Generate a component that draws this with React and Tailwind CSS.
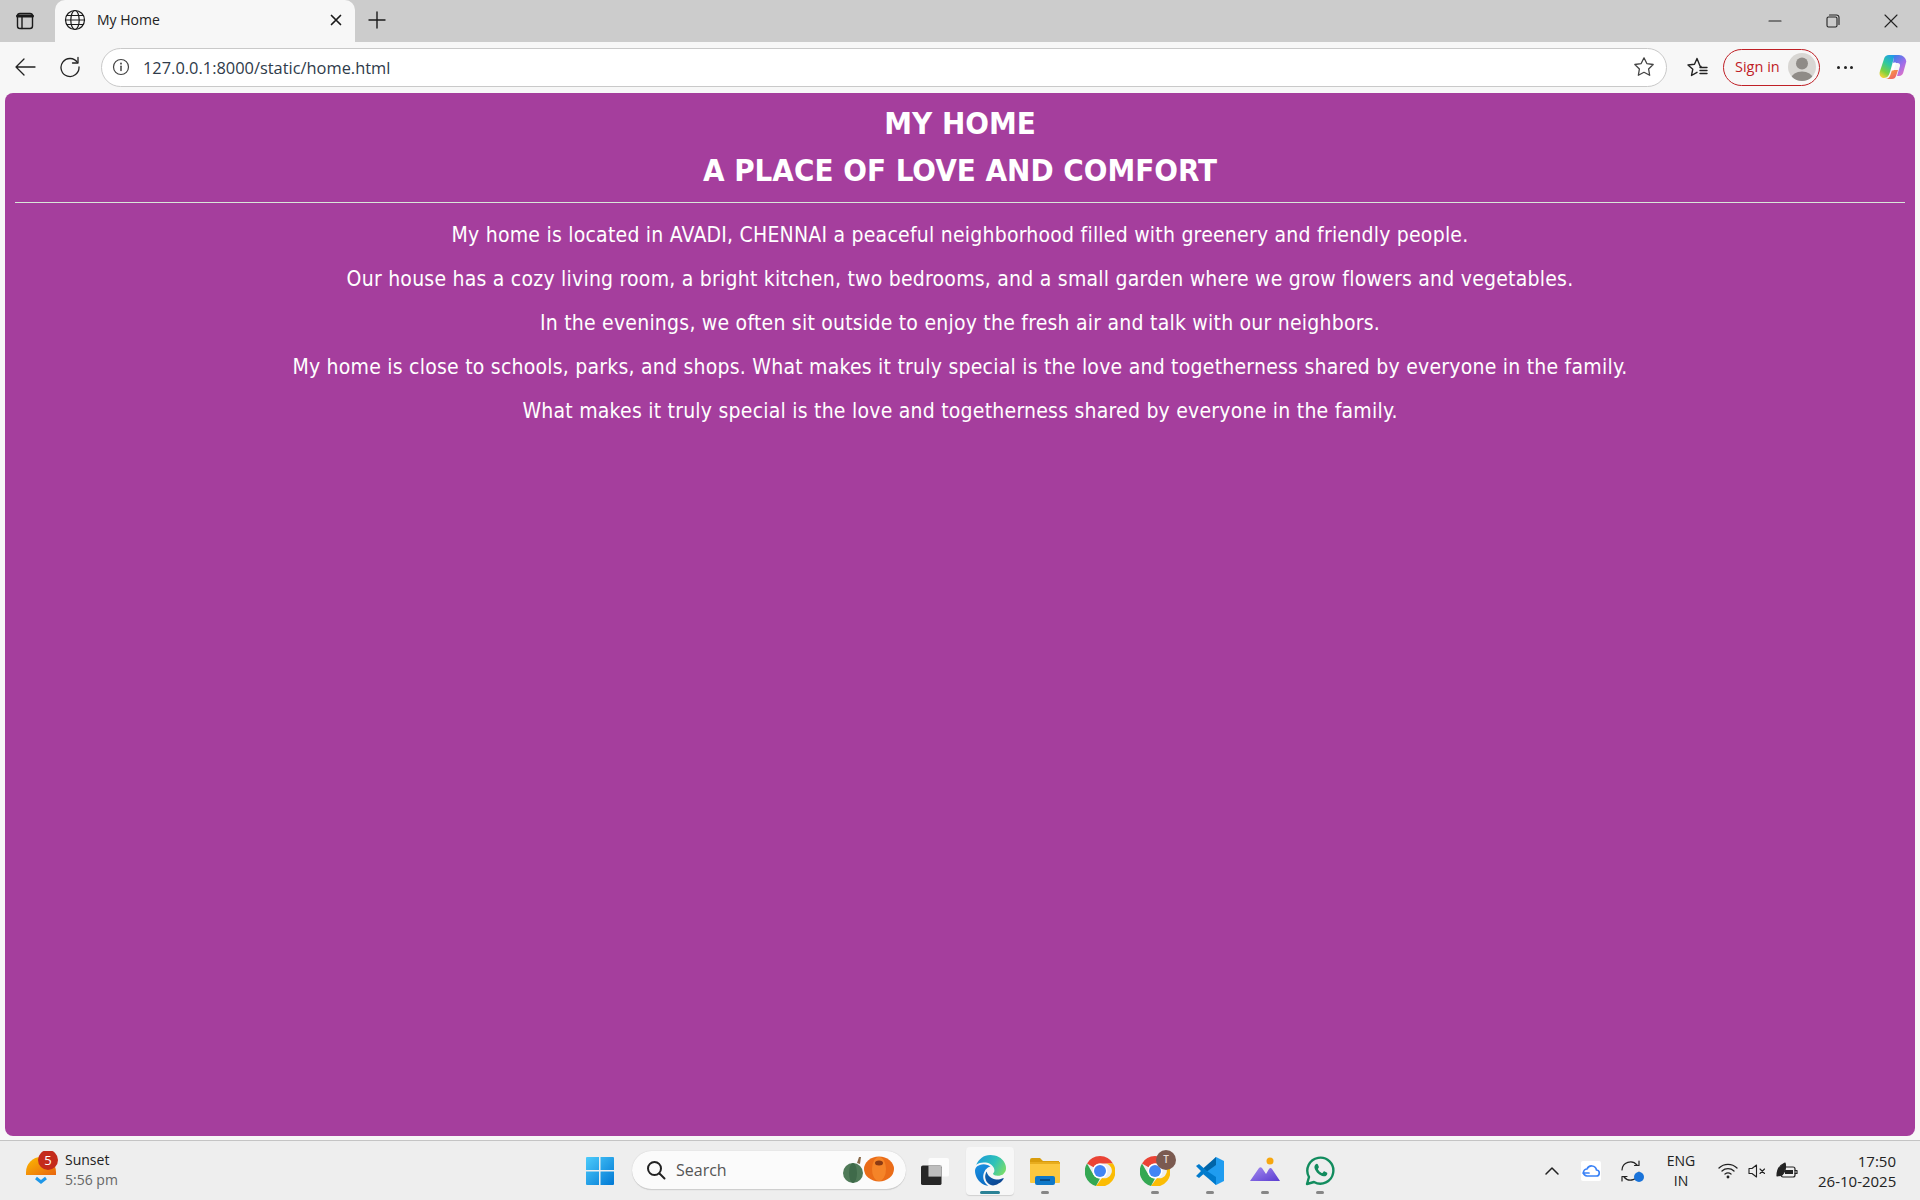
import React from "react";
import { FiStar } from "react-icons/fi";

const lines = [
  "My home is located in AVADI, CHENNAI a peaceful neighborhood filled with greenery and friendly people.",
  "Our house has a cozy living room, a bright kitchen, two bedrooms, and a small garden where we grow flowers and vegetables.",
  "In the evenings, we often sit outside to enjoy the fresh air and talk with our neighbors.",
  "My home is close to schools, parks, and shops. What makes it truly special is the love and togetherness shared by everyone in the family.",
  "What makes it truly special is the love and togetherness shared by everyone in the family.",
];

const Ico = ({ w = 24, h = 24, vb = "0 0 24 24", className = "", strokeWidth = 1.4, children }) => (
  <svg width={w} height={h} viewBox={vb} fill="none" stroke="currentColor" strokeWidth={strokeWidth} strokeLinecap="round" strokeLinejoin="round" className={`shrink-0 ${className}`}>
    {children}
  </svg>
);

const TabStrip = () => (
  <div className="flex h-[42px] items-end bg-[#cccccc] text-[#1a1a1a]">
    <div className="flex h-[42px] w-[55px] items-center justify-center pr-[5px]">
      <Ico w={20} h={20} vb="0 0 20 20">
        <rect x="2.500" y="2.500" width="15" height="15" rx="2.500" />
        <path d="M2.500 5h15" strokeWidth="3" />
        <path d="M7 6.500v11" />
      </Ico>
    </div>
    <div className="flex h-[42px] w-[300px] items-center rounded-t-[10px] bg-[#f7f7f7] pb-[3px] pl-[9px] pr-[9px]">
      <Ico w={22} h={22} vb="0 0 22 22" strokeWidth={1.2}>
        <circle cx="11" cy="11" r="9.500" />
        <ellipse cx="11" cy="11" rx="4.200" ry="9.500" />
        <path d="M1.500 11h19M2.800 6.500h16.400M2.800 15.500h16.400" />
      </Ico>
      <span className="ml-[11px] flex-1 text-[14px] font-['Open_Sans','Noto_Sans',sans-serif] text-[#222]">My Home</span>
      <Ico w={14} h={14} vb="0 0 14 14" className="mr-[3px]" strokeWidth={1.7}>
        <path d="M2.500 2.500l9 9M11.500 2.500l-9 9" />
      </Ico>
    </div>
    <div className="flex h-[42px] w-[44px] items-center justify-center pb-[3px]">
      <Ico w={20} h={20} vb="0 0 20 20">
        <path d="M10 2v16M2 10h16" />
      </Ico>
    </div>
    <div className="flex-1" />
    <div className="flex h-[42px] items-center text-[#222]">
      <div className="flex w-[58px] justify-center">
        <Ico w={14} h={14} vb="0 0 14 14" strokeWidth={1.1}><path d="M1 7h12" /></Ico>
      </div>
      <div className="flex w-[58px] justify-center">
        <Ico w={14} h={14} vb="0 0 14 14" strokeWidth={1.1}>
          <rect x="1" y="3" width="10" height="10" rx="1.500" />
          <path d="M3.500 1h7A2.500 2.500 0 0 1 13 3.500v7" />
        </Ico>
      </div>
      <div className="flex w-[58px] justify-center">
        <Ico w={14} h={14} vb="0 0 14 14" strokeWidth={1.1}><path d="M1 1l12 12M13 1L1 13" /></Ico>
      </div>
    </div>
  </div>
);

const Copilot = () => (
  <svg width="28" height="28" viewBox="0 0 28 28" className="shrink-0">
    <defs>
      <linearGradient id="cpa" x1="0.700" y1="0" x2="0.200" y2="1">
        <stop offset="0" stopColor="#1f9be8" />
        <stop offset="0.4" stopColor="#2fc8a0" />
        <stop offset="0.75" stopColor="#7fd13f" />
        <stop offset="1" stopColor="#f5d33a" />
      </linearGradient>
      <linearGradient id="cpb" x1="0.200" y1="0" x2="0.800" y2="1">
        <stop offset="0" stopColor="#3f7fe8" />
        <stop offset="0.5" stopColor="#9a6eea" />
        <stop offset="1" stopColor="#e573c4" />
      </linearGradient>
      <linearGradient id="cpc" x1="0" y1="0" x2="1" y2="1">
        <stop offset="0" stopColor="#f9b032" />
        <stop offset="1" stopColor="#ee5570" />
      </linearGradient>
    </defs>
    <path d="M10 2h8c-1.500 0-2.500 1-3 2.500L11 19c-.8 3-2.500 6-6 6-3 0-5-2.500-4.300-6L5 6c.6-2.500 2.500-4 5-4z" fill="url(#cpa)" />
    <path d="M16 2h4c4 0 7 3 7.300 6.500l-3 11c-.6 2-2 3.500-4.300 3.500h-2l3-10c.4-1.800-.8-3-2.500-3H14l.8-5.500c.2-1.500.6-2.500 1.200-2.500z" fill="url(#cpb)" />
    <path d="M13 17h6l-2 6c-.6 1.800-2 3-4 3H6c3 0 5-2 5.700-5z" fill="url(#cpc)" />
    <path d="M14.500 9.500h2.500l-2.500 8H12z" fill="#fff" />
  </svg>
);

const Toolbar = () => (
  <div className="flex h-[50px] items-center bg-[#f7f7f7] text-[#222]">
    <div className="flex w-[47px] justify-center pl-[2px]">
      <Ico w={22} h={22} vb="0 0 22 22" strokeWidth={1.3}><path d="M21 11H2M10 3l-8 8 8 8" /></Ico>
    </div>
    <div className="flex w-[46px] justify-center">
      <Ico w={22} h={22} vb="0 0 22 22" strokeWidth={1.3}>
        <path d="M18.500 6.500A9 9 0 1 0 20 11" />
        <path d="M19 1.500v5.500h-5.500" />
      </Ico>
    </div>
    <div className="ml-[8px] flex h-[39px] w-[1566px] items-center rounded-full border border-[#c9c9c9] bg-white pl-[10px] pr-[11px]">
      <Ico w={18} h={18} vb="0 0 18 18" className="text-[#444]" strokeWidth={1.2}>
        <circle cx="9" cy="9" r="7.500" />
        <path d="M9 8.200v4.300" strokeWidth="1.500" />
        <path d="M9 5.500v.2" strokeWidth="1.800" />
      </Ico>
      <span className="ml-[13px] flex-1 pt-[2px] font-['Open_Sans','Noto_Sans',sans-serif] text-[16.400px] text-[#2f3b4a]">127.0.0.1:8000/static/home.html</span>
      <FiStar className="text-[#444]" size={22} strokeWidth={1.4} />
    </div>
    <div className="ml-[19px] flex w-[21px] justify-center">
      <Ico w={22} h={22} vb="0 0 22 22" strokeWidth={1.4}>
        <path d="M15 10.500l-.9-.2L11 2.500 8.500 8.300 2 9l4.800 4.200L5.500 19.500l5.500-3.200" />
        <path d="M14 11.500h7M14 14.500h7M14 17.500h7" />
      </Ico>
    </div>
    <div className="ml-[16px] flex h-[37px] w-[97px] items-center justify-between rounded-full border-[1.500px] border-[#bf2026] pl-[11px] pr-[3px]">
      <span className="font-['Open_Sans','Noto_Sans',sans-serif] text-[14.500px] text-[#bf2026]">Sign in</span>
      <div className="flex h-[28px] w-[28px] items-center justify-center overflow-hidden rounded-full bg-[#d8d6d3]">
        <svg width="28" height="28" viewBox="0 0 28 28">
          <circle cx="14" cy="10.500" r="6" fill="#8f8b87" />
          <ellipse cx="14" cy="25" rx="10.500" ry="6.500" fill="#8f8b87" />
        </svg>
      </div>
    </div>
    <div className="ml-[17px] flex w-[16px] justify-between">
      <span className="h-[3px] w-[3px] rounded-full bg-[#222]" />
      <span className="h-[3px] w-[3px] rounded-full bg-[#222]" />
      <span className="h-[3px] w-[3px] rounded-full bg-[#222]" />
    </div>
    <div className="ml-[26px]"><Copilot /></div>
  </div>
);

const Page = () => (
  <div className="flex-1 bg-[#f7f7f7] px-[5px] pt-px">
    <div className="h-[1043px] rounded-[8px] bg-[#a53e9d] px-[10px] text-center text-white font-['DejaVu_Sans_Condensed','DejaVu_Sans',sans-serif]">
      <h1 className="pt-[7px] text-[31px] leading-[47px] font-bold">MY HOME</h1>
      <h1 className="text-[31px] leading-[47px] font-bold">A PLACE OF LOVE AND COMFORT</h1>
      <hr className="mt-[8px] border-t border-[#d9e6d9]" />
      <div className="mt-[20px] flex flex-col gap-[20px]">
        {lines.map((l, i) => (
          <p key={i} className="text-[21px] leading-[24px] tracking-[0.23px]">{l}</p>
        ))}
      </div>
    </div>
  </div>
);

const Weather = () => (
  <div className="flex items-center">
    <svg width="34" height="40" viewBox="0 0 34 40" className="shrink-0">
      <defs>
        <linearGradient id="sun" x1="0" y1="0" x2="1" y2="1">
          <stop offset="0" stopColor="#fdbb00" />
          <stop offset="1" stopColor="#e8650f" />
        </linearGradient>
      </defs>
      <path d="M2 24V21A15 15 0 0 1 32 21v3z" fill="url(#sun)" />
      <path d="M12 27l5 4 5-4" stroke="#1e97e8" strokeWidth="3" fill="none" />
      <circle cx="24" cy="9" r="10" fill="#c42b1c" />
      <text x="24" y="13.500" textAnchor="middle" fontSize="13" fill="#fff" fontFamily="Open Sans">5</text>
    </svg>
    <div className="ml-[7px] -mt-[2px] font-['Open_Sans','Noto_Sans',sans-serif] text-[14px] leading-[20px]">
      <div className="text-[#222]">Sunset</div>
      <div className="text-[#666]">5:56 pm</div>
    </div>
  </div>
);

const StartIcon = () => (
  <svg width="30" height="30" viewBox="0 0 30 30" className="shrink-0">
    <defs>
      <linearGradient id="win" x1="0" y1="0" x2="1" y2="1">
        <stop offset="0" stopColor="#4ccbfb" />
        <stop offset="1" stopColor="#0078d4" />
      </linearGradient>
    </defs>
    <path d="M1 2a1 1 0 0 1 1-1h12v13H1z M15.500 1H28a1 1 0 0 1 1 1v12H15.500z M1 15.500h13V29H2a1 1 0 0 1-1-1z M15.500 15.500H29V28a1 1 0 0 1-1 1H15.500z" fill="url(#win)" />
  </svg>
);

const Pumpkins = () => (
  <svg width="52" height="28" viewBox="0 0 52 28" className="shrink-0">
    <path d="M14 7l2-6h2l-1 7z" fill="#8a6a4a" />
    <ellipse cx="10" cy="17" rx="10" ry="10" fill="#4f7a58" />
    <ellipse cx="10" cy="17" rx="4" ry="10" fill="#3f6a4a" />
    <ellipse cx="36" cy="13" rx="15" ry="12.500" fill="#ea6c18" />
    <ellipse cx="36" cy="13" rx="7" ry="12" fill="#f58428" />
    <ellipse cx="36" cy="7" rx="4" ry="2.500" fill="#8a3a14" />
  </svg>
);

const Search = () => (
  <div className="ml-[17px] flex h-[39px] w-[274px] items-center rounded-full border-b border-[#cfcfcf] bg-[#fbfbfb] pl-[14px] pr-[11px] shadow-[0_0_1px_#bbb]">
    <Ico w={20} h={20} vb="0 0 20 20" strokeWidth={2} className="text-[#222]">
      <circle cx="8.500" cy="8.500" r="6.500" />
      <path d="M13.500 13.500l5 5" />
    </Ico>
    <span className="ml-[10px] flex-1 font-['Open_Sans','Noto_Sans',sans-serif] text-[16px] text-[#555]">Search</span>
    <Pumpkins />
  </div>
);

const TaskView = () => (
  <svg width="30" height="28" viewBox="0 0 32 30" className="ml-[14px] shrink-0">
    <rect x="9" y="1" width="22" height="20" rx="2" fill="#ffffff" fillOpacity="0.8" />
    <rect x="1" y="9" width="22" height="21" rx="2" fill="#262626" />
    <rect x="9" y="9" width="14" height="12" fill="#bdbdbd" />
  </svg>
);

const EdgeIcon = () => (
  <svg width="31" height="31" viewBox="0 0 24 24">
    <defs>
      <linearGradient id="edgeTop" x1="0" y1="0.300" x2="1" y2="0.700">
        <stop offset="0" stopColor="#1d9ed8" />
        <stop offset="0.55" stopColor="#2fc2b8" />
        <stop offset="1" stopColor="#78dc6a" />
      </linearGradient>
      <linearGradient id="edgeLeft" x1="0.300" y1="0" x2="0.600" y2="1">
        <stop offset="0" stopColor="#1a8fe0" />
        <stop offset="1" stopColor="#0b6cc4" />
      </linearGradient>
      <linearGradient id="edgeWave" x1="0" y1="0" x2="1" y2="1">
        <stop offset="0" stopColor="#0d65b5" />
        <stop offset="1" stopColor="#0c3f8a" />
      </linearGradient>
    </defs>
    <path fill="url(#edgeWave)" d="M21.860 17.860q.14 0 .25.12.1.13.1.25t-.11.33l-.32.46-.43.53-.44.5q-.21.25-.38.42l-.22.23q-.58.53-1.340 1.040-.76.51-1.600.91-.86.40-1.740.64t-1.670.24q-.9 0-1.690-.28-.8-.28-1.480-.78-.68-.5-1.220-1.170-.53-.66-.92-1.440-.38-.77-.58-1.600-.2-.83-.2-1.670 0-1 .32-1.960.33-.97.87-1.800.14.95.55 1.770.41.82 1.020 1.500.6.68 1.380 1.210.78.54 1.640.9.86.36 1.770.56.92.2 1.800.2 1.120 0 2.180-.24 1.060-.23 2.060-.72l.2-.1.2-.05z" />
    <path fill="url(#edgeLeft)" d="M6.360 16.590q0 1.100.27 2.150.27 1.060.78 2.030.51.96 1.240 1.770.74.82 1.660 1.400-1.470-.2-2.800-.74-1.330-.55-2.480-1.370-1.150-.83-2.080-1.900-.92-1.070-1.580-2.330T.36 14.940Q0 13.540 0 12.060q0-.81.32-1.490.31-.68.83-1.230.53-.55 1.200-.96.66-.4 1.350-.66.74-.27 1.500-.39.78-.12 1.550-.12.7 0 1.420.1.72.12 1.400.35.68.23 1.320.57.63.35 1.160.83-.35 0-.7.07-.33.07-.65.23v-.02q-.63.28-1.200.74-.57.46-1.050 1.040-.48.58-.87 1.260-.38.67-.65 1.390-.27.71-.42 1.440-.15.72-.15 1.380z" />
    <path fill="url(#edgeTop)" d="M11.960.06q1.700 0 3.330.39 1.630.38 3.070 1.150 1.430.77 2.620 1.930 1.180 1.160 1.980 2.700.49.94.76 1.960.28 1 .28 2.080 0 .89-.23 1.700-.24.8-.69 1.480-.45.68-1.100 1.220-.64.53-1.450.88-.54.24-1.110.36-.58.13-1.160.13-.42 0-.97-.03-.54-.03-1.100-.12-.55-.09-1.050-.28-.5-.19-.84-.5-.12-.09-.23-.24-.1-.16-.1-.33 0-.15.16-.35.16-.2.35-.5.2-.28.36-.68.16-.4.16-.95 0-1.060-.4-1.960-.4-.91-1.060-1.640-.66-.74-1.520-1.280-.86-.55-1.790-.89-.84-.3-1.720-.44-.87-.14-1.760-.14-1.550 0-3.060.45T.94 7.550q.71-1.740 1.810-3.130Q3.850 3.030 5.200 2.050 6.560 1.070 8.170.56 9.780.05 11.960.06z" />
  </svg>
);

const Folder = () => (
  <svg width="32" height="30" viewBox="0 0 32 30">
    <path d="M1 4a2 2 0 0 1 2-2h8l3 3h16v5H1z" fill="#d99c0c" />
    <path d="M1 6h30v20a1 1 0 0 1-1 1H2a1 1 0 0 1-1-1z" fill="#fcc83e" />
    <path d="M1 6h30v2H1z" fill="#e8ad1e" />
    <rect x="6" y="20" width="20" height="9" rx="2" fill="#0f78c8" />
    <path d="M11 24h10" stroke="#073f73" strokeWidth="1.500" />
  </svg>
);

const Chrome = () => (
  <svg width="30" height="30" viewBox="0 0 30 30">
    <path d="M15 0a15 15 0 0 1 13 7.500H15a7.500 7.500 0 0 0-6.500 3.750L2 7.500A15 15 0 0 1 15 0z" fill="#ea4335" />
    <path d="M2 7.500L8.500 18.750A7.500 7.500 0 0 0 15 22.500L11 30A15 15 0 0 1 2 7.500z" fill="#34a853" />
    <path d="M28 7.500A15 15 0 0 1 11 30l6-8a7.500 7.500 0 0 0 4.500-14.500z" fill="#fbbc04" />
    <circle cx="15" cy="15" r="7.500" fill="#fff" />
    <circle cx="15" cy="15" r="6" fill="#4285f4" />
  </svg>
);

const ChromeBadge = () => (
  <div className="relative h-[30px] w-[30px]">
    <Chrome />
    <span className="absolute -right-[6px] -top-[6px] flex h-[20px] w-[20px] items-center justify-center rounded-full bg-[#7b5a50] font-['Open_Sans',sans-serif] text-[10px] font-semibold text-[#e6dcd8]">T</span>
  </div>
);

const VSCode = () => (
  <svg width="30" height="30" viewBox="0 0 30 30">
    <path d="M21 1l8 4v20l-8 4L8 16z" fill="#1f9cf0" />
    <path d="M21 1v8l-9 6.500L8 12.500z" fill="#0065a9" />
    <path d="M21 21v8L8 18l4-3z" fill="#007acc" />
    <path d="M1 10l3-2 8 7-8 7-3-2 5-5z" fill="#007acc" />
  </svg>
);

const Mountain = () => (
  <svg width="30" height="30" viewBox="0 0 30 30">
    <defs>
      <linearGradient id="mtn" x1="0" y1="0" x2="1" y2="1">
        <stop offset="0" stopColor="#a58cf0" />
        <stop offset="1" stopColor="#5a3cd0" />
      </linearGradient>
    </defs>
    <circle cx="20" cy="5" r="3.500" fill="#f7a70f" />
    <path d="M0 25L9 12c1-1 2-1 3 0l4 6 3-5c1-1.500 2-1.500 3 0l8 12H0z" fill="url(#mtn)" />
  </svg>
);

const Whatsapp = () => (
  <svg width="30" height="30" viewBox="0 0 30 30" fill="none">
    <path d="M2 28l2-7a13 13 0 1 1 5 5z" stroke="#128c5e" strokeWidth="2.400" strokeLinejoin="round" />
    <path d="M10.500 8.500c1-1 2-.8 2.500.2l.8 2c.2.600 0 1-.8 2-.2.300 0 .6.200 1 1 1.500 2 2.500 3.500 3.200.4.200.7.100 1-.2l.8-1c.4-.4.800-.4 1.200-.2l2 1c.7.400.8 1 .4 2-.6 1.400-2 2-3.500 1.800-4-.6-7.800-4-9-8-.4-1.500 0-2.800.9-3.800z" fill="#128c5e" />
  </svg>
);

const AppSlot = ({ active, dot, children }) => (
  <div className={`relative flex h-[48px] w-[48px] items-center justify-center rounded-[4px] ${active ? "bg-[#f7f7f7] shadow-[0_1px_1px_#d0d0d0]" : ""}`}>
    {children}
    {active && <span className="absolute bottom-[1px] left-[14px] h-[3px] w-[20px] rounded-full bg-[#2a8296]" />}
    {dot && <span className="absolute bottom-[1px] left-[20px] h-[3px] w-[8px] rounded-full bg-[#868686]" />}
  </div>
);

const Tray = () => (
  <div className="flex items-center text-[#222]">
    <Ico w={16} h={10} vb="0 0 16 10" strokeWidth={1.5}><path d="M2 8l6-6 6 6" /></Ico>
    <div className="ml-[21px] flex h-[20px] w-[20px] items-center justify-center rounded-[2px] bg-white">
      <Ico w={18} h={14} vb="0 0 18 14" strokeWidth={1.7} className="text-[#3b82f6]">
        <path d="M5 12h9a3 3 0 0 0 .5-6A5 5 0 0 0 5 5a3.500 3.500 0 0 0 0 7zM1 9h6" />
      </Ico>
    </div>
    <div className="relative ml-[19px] h-[22px] w-[22px]">
      <Ico w={22} h={22} vb="0 0 22 22" strokeWidth={1.2}>
        <path d="M2 10a8.500 8.500 0 0 1 15-5M19 1v4.500h-4.500" />
        <path d="M19 12a8.500 8.500 0 0 1-15 5M2 21v-4.500h5" />
      </Ico>
      <span className="absolute bottom-[0px] right-[-2px] h-[10px] w-[10px] rounded-full bg-[#1a73d9]" />
    </div>
    <div className="ml-[20px] w-[38px] text-center font-['Open_Sans','Noto_Sans',sans-serif] text-[14px] leading-[20px]">
      <div>ENG</div>
      <div>IN</div>
    </div>
    <Ico w={20} h={16} vb="0 0 20 16" className="ml-[18px]" strokeWidth={1.3}>
      <path d="M1 5a13 13 0 0 1 18 0M4 8a9 9 0 0 1 12 0M7 11a5 5 0 0 1 6 0" />
      <circle cx="10" cy="14" r="0.800" fill="currentColor" />
    </Ico>
    <Ico w={18} h={16} vb="0 0 18 16" className="ml-[10px]" strokeWidth={1.1}>
      <path d="M1 5.500h3L8.500 2v12L4 10.500H1zM12 6l4.500 4.500M16.500 6L12 10.500" />
    </Ico>
    <Ico w={22} h={18} vb="0 0 22 18" className="ml-[10px]" strokeWidth={1.2}>
      <rect x="5" y="5" width="14" height="10" rx="2" />
      <path d="M19 8.500h2v3h-2" />
      <path d="M1 14C1 8 4 3 9 1c1 4 0 9-3 12z" fill="currentColor" />
      <rect x="9" y="8" width="8" height="4" fill="currentColor" stroke="none" />
    </Ico>
    <div className="ml-[20px] w-[78px] text-right font-['Open_Sans','Noto_Sans',sans-serif] text-[15px] leading-[20px] whitespace-nowrap">
      <div>17:50</div>
      <div>26-10-2025</div>
    </div>
  </div>
);

const Taskbar = () => (
  <div className="flex h-[60px] items-center border-t border-[#c4c4c4] bg-[#eeeeee] pl-[24px] pr-[24px]">
    <div className="w-[561px]"><Weather /></div>
    <StartIcon />
    <Search />
    <TaskView />
    <div className="ml-[16px] flex items-center gap-[7px]">
      <AppSlot active><EdgeIcon /></AppSlot>
      <AppSlot dot><Folder /></AppSlot>
      <AppSlot><Chrome /></AppSlot>
      <AppSlot dot><ChromeBadge /></AppSlot>
      <AppSlot dot><VSCode /></AppSlot>
      <AppSlot dot><Mountain /></AppSlot>
      <AppSlot dot><Whatsapp /></AppSlot>
    </div>
    <div className="flex-1" />
    <Tray />
  </div>
);

export default function App() {
  return (
    <div className="flex h-[1200px] w-[1920px] flex-col overflow-hidden">
      <TabStrip />
      <Toolbar />
      <Page />
      <Taskbar />
    </div>
  );
}
